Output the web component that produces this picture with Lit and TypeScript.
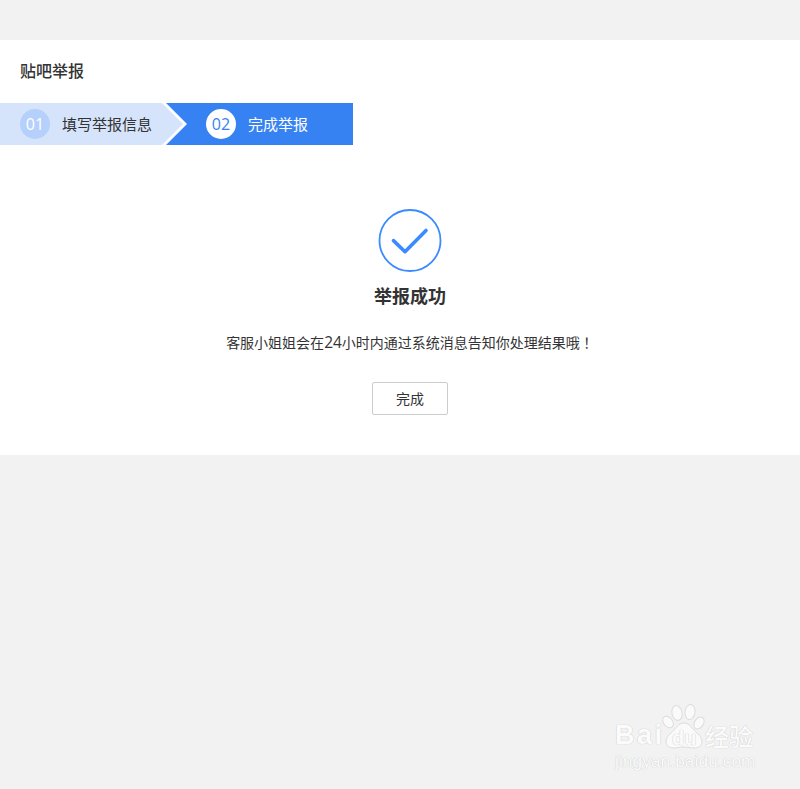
import { LitElement, css, html } from 'lit'
import { customElement } from 'lit/decorators.js'

@customElement('app-root')
export class AppRoot extends LitElement {
  static styles = css`
    :host {
      display: block;
      position: relative;
      height: 789px;
      overflow: hidden;
      background: #f2f2f2;
      color: #333;
      font-family: "Noto Sans CJK SC", "Open Sans", sans-serif;
    }
    .card {
      margin-top: 40px;
      height: 415px;
      background: #fff;
      display: flex;
      flex-direction: column;
    }
    h1 {
      margin: 0;
      padding: 18px 20px 0;
      height: 45px;
      font-size: 16px;
      line-height: 24px;
      font-weight: 500;
      color: #333;
    }
    .steps {
      display: flex;
      height: 42px;
    }
    .step {
      display: flex;
      align-items: center;
      height: 42px;
      font-size: 15px;
      line-height: 20px;
      box-sizing: border-box;
      padding-bottom: 1px;
    }
    .step.one {
      width: 184px;
      padding-left: 20px;
      background: #d6e4fb;
      color: #333;
      clip-path: polygon(0 0, 162px 0, 183px 21px, 162px 42px, 0 42px);
    }
    .step.two {
      width: 187px;
      margin-left: -18px;
      padding-left: 40px;
      background: #3782f2;
      color: #fff;
      clip-path: polygon(0 0, 100% 0, 100% 100%, 0 100%, 21px 21px);
    }
    .num {
      width: 30px;
      height: 30px;
      border-radius: 50%;
      margin: 1px 12px 0 0;
      display: flex;
      align-items: center;
      justify-content: center;
      font-family: "Open Sans", sans-serif;
      font-size: 16px;
    }
    .one .num {
      background: #b5d0fa;
      color: #fff;
    }
    .two .num {
      background: #fff;
      color: #3782f2;
    }
    .result {
      display: flex;
      flex-direction: column;
      align-items: center;
      padding: 64px 0 0 20px;
    }
    .result svg {
      display: block;
      width: 64px;
      height: 64px;
    }
    h2 {
      margin: 9px 0 0;
      font-size: 18px;
      line-height: 26px;
      font-weight: 700;
      color: #333;
    }
    p {
      margin: 22px 0 0;
      font-size: 14px;
      line-height: 24px;
      color: #333;
    }
    .digits {
      font-family: "Open Sans", sans-serif;
      font-size: 15.5px;
      line-height: 1;
    }
    .bang {
      font-family: "Noto Sans CJK TC", sans-serif;
    }
    button {
      margin-top: 28px;
      width: 76px;
      height: 33px;
      padding: 0 0 2px;
      background: #fff;
      border: 1px solid #ccc;
      border-radius: 2px;
      font: inherit;
      font-size: 14px;
      color: #333;
    }
    .mark {
      position: absolute;
      left: 614px;
      top: 702px;
      width: 150px;
      height: 70px;
      color: #fbfbfb;
      text-shadow: 0 0 1px #cdcdcd, 0 0 1px #cdcdcd;
    }
    .mark svg {
      position: absolute;
      left: 0;
      top: 0;
    }
    .mark span {
      position: absolute;
      white-space: nowrap;
      line-height: 1;
    }
    .bai {
      left: 1px;
      top: 20px;
      font: 700 27px "Liberation Sans", sans-serif;
      letter-spacing: 2.5px;
    }
    .du {
      left: 58px;
      top: 26px;
      font: 700 20px "Liberation Sans", sans-serif;
    }
    .jy {
      left: 91px;
      top: 22px;
      font-size: 24px;
      font-weight: 500;
    }
    .url {
      left: 1px;
      top: 51px;
      font: 400 17px "Liberation Sans", sans-serif;
      letter-spacing: 0.2px;
    }
  `

  render() {
    return html`
      <div class="card">
        <h1>贴吧举报</h1>
        <div class="steps">
          <div class="step one"><span class="num">01</span>填写举报信息</div>
          <div class="step two"><span class="num">02</span>完成举报</div>
        </div>
        <div class="result">
          <svg viewBox="0 0 64 64">
            <circle cx="32" cy="31.5" r="30.5" fill="none" stroke="#3a8bff" stroke-width="1.8"></circle>
            <path d="M15.5 31.6 L27 42.7 L48 21.5" fill="none" stroke="#3a8bff" stroke-width="3.6" stroke-linecap="round" stroke-linejoin="round"></path>
          </svg>
          <h2>举报成功</h2>
          <p>客服小姐姐会在<span class="digits">24</span>小时内通过系统消息告知你处理结果哦<span class="bang">！</span></p>
          <button>完成</button>
        </div>
      </div>
      <div class="mark">
        <svg width="110" height="60" viewBox="0 0 110 60" fill="#fafafa" stroke="#dcdcdc" stroke-width="1">
          <ellipse cx="63" cy="11" rx="5" ry="7.5" transform="rotate(-12 63 11)"></ellipse>
          <ellipse cx="76" cy="10" rx="5" ry="7.5" transform="rotate(8 76 10)"></ellipse>
          <ellipse cx="54" cy="20" rx="4.5" ry="6.5" transform="rotate(-38 54 20)"></ellipse>
          <ellipse cx="85" cy="21" rx="4.5" ry="6.5" transform="rotate(32 85 21)"></ellipse>
          <path d="M70 21 C76 21 78 27 83 31 C90 36 90 46 80 46 C76 46 74 45 70 45 C66 45 64 46 60 46 C50 46 50 36 57 31 C62 27 64 21 70 21 Z"></path>
        </svg>
        <span class="bai">Bai</span>
        <span class="du">du</span>
        <span class="jy">经验</span>
        <span class="url">jingyan.baidu.com</span>
      </div>
    `
  }
}
